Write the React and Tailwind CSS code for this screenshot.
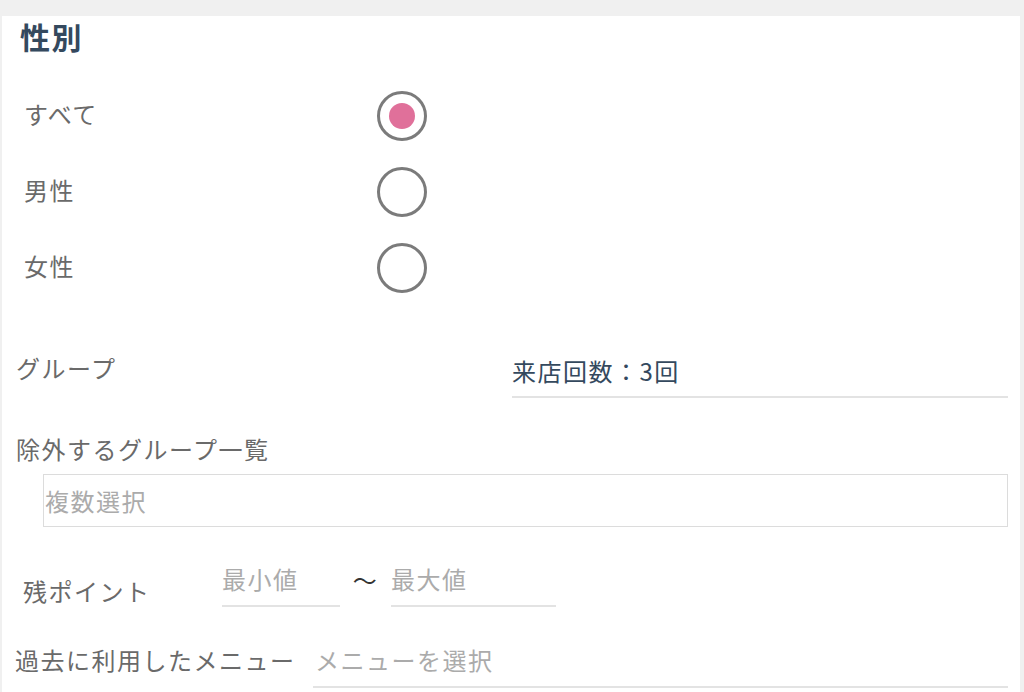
import { useState } from 'react'

const font = { fontFamily: '"Noto Sans CJK JP", "Noto Sans", sans-serif' }

const genders = ['すべて', '男性', '女性']

function Radio({ checked }) {
  return (
    <span className="flex h-[50px] w-[50px] items-center justify-center rounded-full border-[3px] border-[#7b7b7b] bg-white">
      {checked && <span className="h-[26px] w-[26px] rounded-full bg-[#e0709a]" />}
    </span>
  )
}

export default function App() {
  const [gender, setGender] = useState(0)

  return (
    <div className="min-h-[692px] bg-[#f0f0f0] pt-[16px]" style={font}>
      <div className="ml-[2px] mr-[4px] min-h-[676px] bg-white pb-[4px] text-[24px] tracking-[1.5px] text-[#6a6a6a]">
        <div className="flex h-[40px] items-center pl-[18px] text-[30px] font-bold text-[#34495e]">性別</div>

        <div className="mt-[22px]">
          {genders.map((g, i) => (
            <div key={g} className="flex h-[76px] items-center" onClick={() => setGender(i)}>
              <div className="w-[375px] pb-[4px] pl-[22px] leading-none">{g}</div>
              <Radio checked={gender === i} />
            </div>
          ))}
        </div>

        <div className="mt-[40px] flex items-start">
          <div className="flex h-[44px] w-[510px] items-center pl-[14px]">グループ</div>
          <div className="mr-[12px] flex h-[52px] flex-1 items-center border-b-2 border-[#e3e3e3] text-[#34495e]">来店回数：3回</div>
        </div>

        <div className="mt-[33px] flex h-[36px] items-center pl-[14px]">除外するグループ一覧</div>
        <div className="ml-[41px] mr-[12px] mt-[7px] flex h-[53px] items-center border border-[#dcdcdc] pl-[1px] text-[#ababab]">複数選択</div>

        <div className="mt-[26px] flex items-start">
          <div className="flex h-[54px] w-[220px] items-center pl-[21px] pt-[22px]">残ポイント</div>
          <div className="flex h-[54px] w-[118px] items-center border-b-2 border-[#e3e3e3] text-[#ababab]">最小値</div>
          <div className="flex h-[54px] w-[51px] items-center justify-center text-[#333]">〜</div>
          <div className="flex h-[54px] w-[165px] items-center border-b-2 border-[#e3e3e3] text-[#ababab]">最大値</div>
        </div>

        <div className="mt-[26px] flex items-start">
          <div className="flex h-[55px] w-[311px] items-center pl-[13px] pb-[2px] whitespace-nowrap">過去に利用したメニュー</div>
          <div className="mr-[12px] flex h-[55px] flex-1 items-center border-b-2 border-[#e3e3e3] pl-[2px] text-[#ababab]">メニューを選択</div>
        </div>
      </div>
    </div>
  )
}
